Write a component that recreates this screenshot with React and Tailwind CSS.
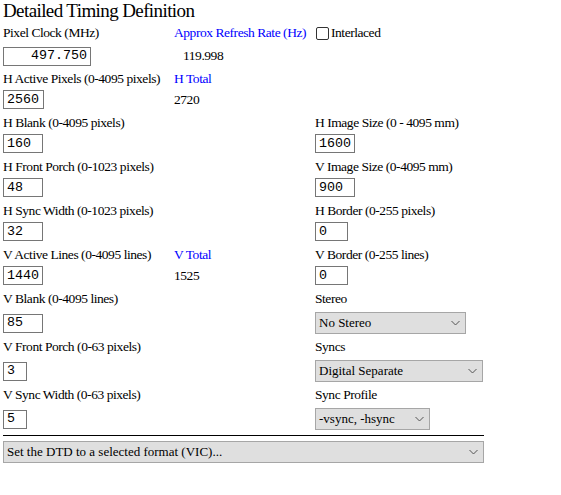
import React from "react";

function Row({ a, b, c, cls }) {
  return (
    <div className={cls}>
      <div className="w-[171px] shrink-0 flex">{a}</div>
      <div className="w-[141px] shrink-0 flex">{b}</div>
      <div className="flex-1 flex">{c}</div>
    </div>
  );
}

const LABEL_ROW = "flex h-[22px] items-center";
const INPUT_ROW = "flex h-[22px] items-start";
const INPUT_ROW_MID = "flex h-[26px] items-center";

function Box({ value, w, right }) {
  return (
    <div
      className={
        "h-[19px] border border-[#767676] bg-white flex items-center font-['Liberation_Mono',monospace] text-[13.33px] tracking-normal text-black " +
        w +
        (right ? " justify-end pr-[3px]" : " pl-[3px]")
      }
    >
      {value}
    </div>
  );
}

function Chevron() {
  return (
    <svg width="9" height="6" viewBox="0 0 9 6" className="shrink-0">
      <path d="M0.5 1 L4.5 5 L8.5 1" fill="none" stroke="#555" strokeWidth="1" />
    </svg>
  );
}

function Select({ text, w }) {
  return (
    <div
      className={
        "h-[22px] bg-[#dfdfdf] border border-[#a6a6a6] flex items-center justify-between pl-[3px] pr-[5px] text-[13px] tracking-normal " +
        w
      }
    >
      <span>{text}</span>
      <Chevron />
    </div>
  );
}

const Blue = ({ children }) => <span className="text-[#0000ff]">{children}</span>;

export default function App() {
  return (
    <div className="w-[561px] h-[495px] bg-white pl-[3px] font-['Liberation_Serif',serif] text-[13.5px] tracking-[-0.45px] text-black overflow-hidden">
      <div className="h-[22px] leading-[22px] text-[19px] tracking-[-0.6px]">Detailed Timing Definition</div>

      <Row
        cls={LABEL_ROW}
        a={<span>Pixel Clock (MHz)</span>}
        b={<Blue>Approx Refresh Rate (Hz)</Blue>}
        c={
          <div className="flex items-center">
            <div className="w-[13px] h-[13px] border border-[#333] rounded-[2px] ml-[1px] bg-white" />
            <span className="ml-[2px]">Interlaced</span>
          </div>
        }
      />
      <Row
        cls="flex h-[24px] items-center"
        a={<Box value="497.750" w="w-[88px]" right />}
        b={<span className="pl-[9px]">119.998</span>}
      />

      <Row cls={LABEL_ROW} a={<span className="whitespace-nowrap">H Active Pixels (0-4095 pixels)</span>} b={<Blue>H Total</Blue>} />
      <Row cls={INPUT_ROW} a={<Box value="2560" w="w-[41px]" />} b={<span className="leading-[19px]">2720</span>} />

      <Row cls={LABEL_ROW} a={<span>H Blank (0-4095 pixels)</span>} c={<span className="whitespace-nowrap">H Image Size (0 - 4095 mm)</span>} />
      <Row cls={INPUT_ROW} a={<Box value="160" w="w-[40px]" />} c={<Box value="1600" w="w-[40px]" />} />

      <Row cls={LABEL_ROW} a={<span className="whitespace-nowrap">H Front Porch (0-1023 pixels)</span>} c={<span>V Image Size (0-4095 mm)</span>} />
      <Row cls={INPUT_ROW} a={<Box value="48" w="w-[40px]" />} c={<Box value="900" w="w-[40px]" />} />

      <Row cls={LABEL_ROW} a={<span className="whitespace-nowrap">H Sync Width (0-1023 pixels)</span>} c={<span>H Border (0-255 pixels)</span>} />
      <Row cls={INPUT_ROW} a={<Box value="32" w="w-[40px]" />} c={<Box value="0" w="w-[33px]" />} />

      <Row cls={LABEL_ROW} a={<span className="whitespace-nowrap">V Active Lines (0-4095 lines)</span>} b={<Blue>V Total</Blue>} c={<span>V Border (0-255 lines)</span>} />
      <Row cls={INPUT_ROW} a={<Box value="1440" w="w-[40px]" />} b={<span className="leading-[19px]">1525</span>} c={<Box value="0" w="w-[33px]" />} />

      <Row cls={LABEL_ROW} a={<span>V Blank (0-4095 lines)</span>} c={<span>Stereo</span>} />
      <Row cls={INPUT_ROW_MID} a={<Box value="85" w="w-[40px]" />} c={<Select text="No Stereo" w="w-[151px]" />} />

      <Row cls={LABEL_ROW} a={<span>V Front Porch (0-63 pixels)</span>} c={<span>Syncs</span>} />
      <Row cls={INPUT_ROW_MID} a={<Box value="3" w="w-[24px]" />} c={<Select text="Digital Separate" w="w-[168px]" />} />

      <Row cls={LABEL_ROW} a={<span>V Sync Width (0-63 pixels)</span>} c={<span>Sync Profile</span>} />
      <Row cls={INPUT_ROW_MID} a={<Box value="5" w="w-[24px]" />} c={<Select text="-vsync, -hsync" w="w-[115px]" />} />

      <div className="mt-[3px] h-[1px] w-[481px] bg-black" />
      <div className="mt-[5px]">
        <Select text="Set the DTD to a selected format (VIC)..." w="w-[481px]" />
      </div>
    </div>
  );
}
